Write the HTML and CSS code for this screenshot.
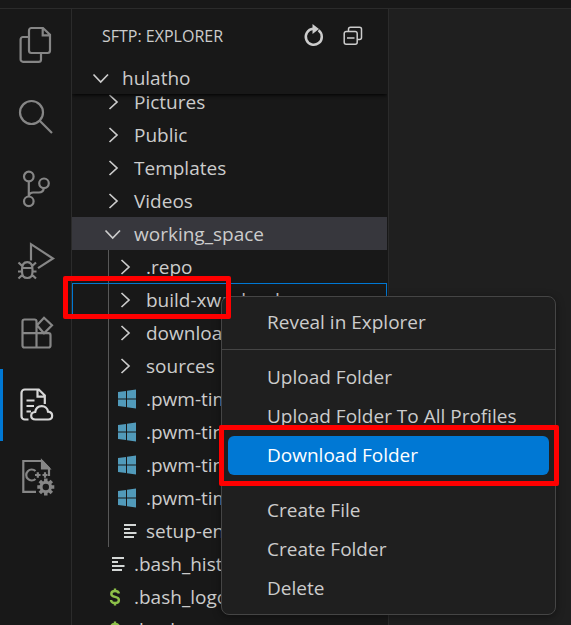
FILE: index.html
```html
<!DOCTYPE html>
<html lang="en">
<head>
<meta charset="utf-8">
<title>SFTP: Explorer</title>
<link rel="stylesheet" href="styles.css">
</head>
<body>
<svg class="defs" aria-hidden="true">
  <symbol id="right" viewBox="0 0 24 24"><path d="M8.500 5l7.500 7-7.500 7" fill="none" stroke="#ccc" stroke-width="1.700"/></symbol>
  <symbol id="down" viewBox="0 0 24 24"><path d="M4.500 8.500l7.200 7.500 7.300-7.500" fill="none" stroke="#ccc" stroke-width="1.700"/></symbol>
  <symbol id="windows" viewBox="0 0 24 24"><path d="M5 5l8-1v7.500H5zM14 3.800l9-1.300v9h-9zM5 12.400h8v7.700L5 19zM14 12.400h9v9l-9-1.200z" fill="#519aba"/></symbol>
  <symbol id="lines" viewBox="0 0 24 24"><path d="M11 6h12M11 10h6M11 14h12.500M11 18h10" fill="none" stroke="#d4d7d6" stroke-width="1.800"/></symbol>
  <symbol id="dollar" viewBox="0 0 24 24"><path d="M18 8.500C17.500 6.500 16 6 14 6s-3.700.9-3.700 2.900c0 4.300 7.600 1.800 7.600 6 0 2-1.700 3.100-3.900 3.100s-3.900-.8-4-3M14 3.500V6M14 18v2.500" fill="none" stroke="#8dc149" stroke-width="2.400"/></symbol>
</svg>
<div class="workbench">
  <header class="titlebar"></header>
  <div class="body">
    <nav class="activity" aria-label="Activity bar">
      <button class="act" aria-label="Explorer"><svg viewBox="0 0 36 36"><path d="M11 10H5a2.400 2.400 0 0 0-2.400 2.400v20A2.400 2.400 0 0 0 5 34.800h15.600a2.400 2.400 0 0 0 2.400-2.400V26M13.400 1H25l7 6.700v15.900a2.400 2.400 0 0 1-2.400 2.400H13.400a2.400 2.400 0 0 1-2.400-2.400V3.400A2.400 2.400 0 0 1 13.400 1zM24.700 1v7.300H32"/></svg></button>
      <button class="act" aria-label="Search"><svg viewBox="0 0 36 36"><circle cx="13.500" cy="13.500" r="11.500"/><path d="M21.500 21.500L34 34"/></svg></button>
      <button class="act" aria-label="Source control"><svg viewBox="0 0 36 36"><circle cx="10.800" cy="5.500" r="4.800"/><circle cx="10.800" cy="30.300" r="4.800"/><circle cx="26" cy="12.300" r="4.800"/><path d="M10.800 10.300v15.200M10.800 25c.5-2.500 2-3.500 4.500-3.500h5.500c3 0 4.700-1.500 5-4.400"/></svg></button>
      <button class="act" aria-label="Run and debug"><svg viewBox="0 0 36 36"><path d="M13 17.500V1.200l22 14.300-15 9.700"/><path d="M4 26.700c0-5 1.500-7.500 5.300-7.500s5.200 2.500 5.200 7.500v2c0 4-2 6.300-5.200 6.300S4 32.700 4 28.700zM4.500 25h9.500M4 22.700L.5 19.500M14.500 22.700L18 19.500M4 28.500H0M14.500 28.500h4M4.800 31.500L.5 35.500M13.800 31.500l4.200 4"/></svg></button>
      <button class="act" aria-label="Extensions"><svg viewBox="0 0 36 36"><path d="M18.500 18.200V6.500a2 2 0 0 0-2-2h-10a2 2 0 0 0-2 2v24a2 2 0 0 0 2 2h24a2 2 0 0 0 2-2V20.200a2 2 0 0 0-2-2H4.500M18.500 18.200v14.300M26 2.800l8 7.500-8 8-7-8z"/></svg></button>
      <button class="act current" aria-label="SFTP"><svg viewBox="0 0 36 36"><path d="M10.500 32.500H6.800a3.300 3.300 0 0 1-3.300-3.300V5.800a3.300 3.300 0 0 1 3.300-3.300h14l6 6V17M19.500 3v6.700H27M8.500 13.500h8M8.500 19H16M8.500 24.500h4.500"/><path d="M17.500 32.500c-5.800 0-5.600-7.300-.3-7.500 1.200-7.800 12-7.800 12.800-.3 5.600.5 5.400 7.800.2 7.800z"/></svg></button>
      <button class="act" aria-label="C/C++ configurations"><svg viewBox="0 0 36 36"><path d="M18 32.800H5.300V2H24l7 7.300V17"/><path d="M24 2v7.300h7z" fill="#868686"/><path d="M17.500 12a5.500 5.500 0 1 0 0 8M17 16h5.500M19.800 13.300v5.500M24.500 16h5M27 13.300v5.500"/><circle cx="27.800" cy="28" r="4.700" stroke-width="3"/><path d="M27.800 19.500v3.500M27.800 33v3.500M19.300 28h3.500M32.800 28h3.500M21.800 22l2.300 2.300M31.500 31.700l2.300 2.300M33.800 22l-2.300 2.300M24.100 31.700L21.800 34" stroke-width="3.500"/></svg></button>
    </nav>
    <aside class="sidebar">
      <div class="head">
        <div class="title">
          <h1>SFTP: EXPLORER</h1>
          <button class="tool" aria-label="Refresh"><svg viewBox="0 0 24 24"><path d="M17.500 6.300A8 8 0 1 1 12 4.800" fill="none" stroke="#ccc" stroke-width="2.500"/><path d="M11.500 0l6.500 5-6.500 5z" fill="#ccc"/></svg></button>
          <button class="tool" aria-label="Collapse all"><svg viewBox="0 0 24 24"><path d="M7.500 7V5.200a2 2 0 0 1 2-2h9a2 2 0 0 1 2 2v8.300a2 2 0 0 1-2 2H16.500M5.200 7.500h9a2 2 0 0 1 2 2v8.800a2 2 0 0 1-2 2h-9a2 2 0 0 1-2-2V9.500a2 2 0 0 1 2-2zM6 14h7.500" fill="none" stroke="#ccc" stroke-width="1.500"/></svg></button>
        </div>
        <div class="row root"><svg><use href="#down"/></svg><span>hulatho</span></div>
      </div>
      <ul class="tree">
        <li><div class="row"><svg><use href="#right"/></svg><span>Pictures</span></div></li>
        <li><div class="row"><svg><use href="#right"/></svg><span>Public</span></div></li>
        <li><div class="row"><svg><use href="#right"/></svg><span>Templates</span></div></li>
        <li><div class="row"><svg><use href="#right"/></svg><span>Videos</span></div></li>
        <li><div class="row selected"><svg><use href="#down"/></svg><span>working_space</span></div>
          <ul class="nested">
            <li><div class="row"><svg><use href="#right"/></svg><span>.repo</span></div></li>
            <li><div class="row focused"><svg><use href="#right"/></svg><span>build-xwayland</span><i class="callout"></i></div></li>
            <li><div class="row"><svg><use href="#right"/></svg><span>downloads</span></div></li>
            <li><div class="row"><svg><use href="#right"/></svg><span>sources</span></div></li>
            <li><div class="row"><svg><use href="#windows"/></svg><span>.pwm-time</span></div></li>
            <li><div class="row"><svg><use href="#windows"/></svg><span>.pwm-time</span></div></li>
            <li><div class="row"><svg><use href="#windows"/></svg><span>.pwm-time</span></div></li>
            <li><div class="row"><svg><use href="#windows"/></svg><span>.pwm-time</span></div></li>
            <li><div class="row"><svg><use href="#lines"/></svg><span>setup-env</span></div></li>
          </ul>
        </li>
        <li><div class="row"><svg><use href="#lines"/></svg><span>.bash_history</span></div></li>
        <li><div class="row"><svg><use href="#dollar"/></svg><span>.bash_logout</span></div></li>
        <li><div class="row"><svg><use href="#dollar"/></svg><span>.bashrc</span></div></li>
      </ul>
    </aside>
    <main class="editor"></main>
  </div>
  <div class="menu" role="menu">
    <button role="menuitem">Reveal in Explorer</button>
    <hr>
    <button role="menuitem">Upload Folder</button>
    <button role="menuitem">Upload Folder To All Profiles</button>
    <button role="menuitem" class="active">Download Folder<i class="callout"></i></button>
    <hr>
    <button role="menuitem">Create File</button>
    <button role="menuitem">Create Folder</button>
    <button role="menuitem">Delete</button>
  </div>
</div>
</body>
</html>
```
FILE: styles.css
```css
* { box-sizing: border-box; }
body {
  margin: 0;
  background: #1f1f1f;
  color: #ccc;
  font-family: "Open Sans", "Noto Sans", sans-serif;
  font-size: 19px;
}
.defs { position: absolute; width: 0; height: 0; }
button { font: inherit; color: inherit; background: none; border: 0; padding: 0; }
ul { list-style: none; margin: 0; padding: 0; }
.workbench {
  position: relative;
  display: flex;
  flex-direction: column;
  height: 100vh;
  overflow: hidden;
}
.titlebar { flex: none; height: 9px; background: #181818; border-bottom: 1px solid #2b2b2b; }
.body { flex: 1; min-height: 0; display: flex; }
.activity {
  flex: none;
  width: 72px;
  background: #181818;
  border-right: 1px solid #2b2b2b;
}
.act { display: flex; align-items: center; justify-content: center; width: 100%; height: 72px; }
.act svg { width: 36px; height: 36px; fill: none; stroke: #868686; stroke-width: 2.2; overflow: visible; }
.act.current { box-shadow: inset 3px 0 #0078d4; }
.act.current svg { stroke: #d7d7d7; }
.sidebar { flex: none; width: 317px; background: #181818; border-right: 1px solid #2b2b2b; }
.head {
  position: relative;
  z-index: 1;
  margin-right: 1px;
  background: #181818;
  box-shadow: 0 1px 4px #000;
  clip-path: inset(0 0 -6px 0);
}
.title { display: flex; align-items: center; gap: 16px; height: 53px; padding: 0 22px 0 30px; }
.title h1 { flex: 1; margin: 0; font-size: 16px; font-weight: 400; white-space: nowrap; }
.tool, .tool svg { display: block; width: 24px; height: 24px; }
.row {
  position: relative;
  display: flex;
  align-items: center;
  gap: 9px;
  height: 33px;
  margin-right: 1px;
  padding-left: 29px;
  line-height: 32px;
  white-space: nowrap;
}
.row svg { flex: none; width: 24px; height: 24px; }
.row.root { height: 32px; margin: 0; padding-left: 17px; }
.tree { margin-top: -9px; }
.nested { position: relative; }
.nested::before {
  content: "";
  position: absolute;
  inset: 0 auto 0 36px;
  width: 1px;
  background: #585858;
}
.nested .row { padding-left: 41px; }
.selected { background: #37373d; }
.focused { box-shadow: inset 0 0 0 1px #0078d4; }
.callout {
  position: absolute;
  z-index: 3;
  border: 5px solid #f00;
  border-radius: 2px;
}
.focused .callout { inset: -7px auto -3px -9px; width: 168px; }
.editor { flex: 1; }
.menu {
  position: absolute;
  z-index: 2;
  top: 296px;
  left: 221px;
  min-width: 335px;
  padding: 6px;
  background: #1f1f1f;
  border: 1px solid #454545;
  border-radius: 8px;
  box-shadow: 0 2px 8px rgba(0, 0, 0, .4);
}
.menu button {
  position: relative;
  display: block;
  width: 100%;
  height: 39px;
  padding: 0 24px 2px 39px;
  border-radius: 6px;
  text-align: left;
  white-space: nowrap;
}
.menu .active { background: #0078d4; color: #fff; }
.menu .callout { inset: -11px -10px -11px -9px; }
.menu hr { height: 1px; margin: 7px -6px 8px; border: 0; background: #454545; }
```
